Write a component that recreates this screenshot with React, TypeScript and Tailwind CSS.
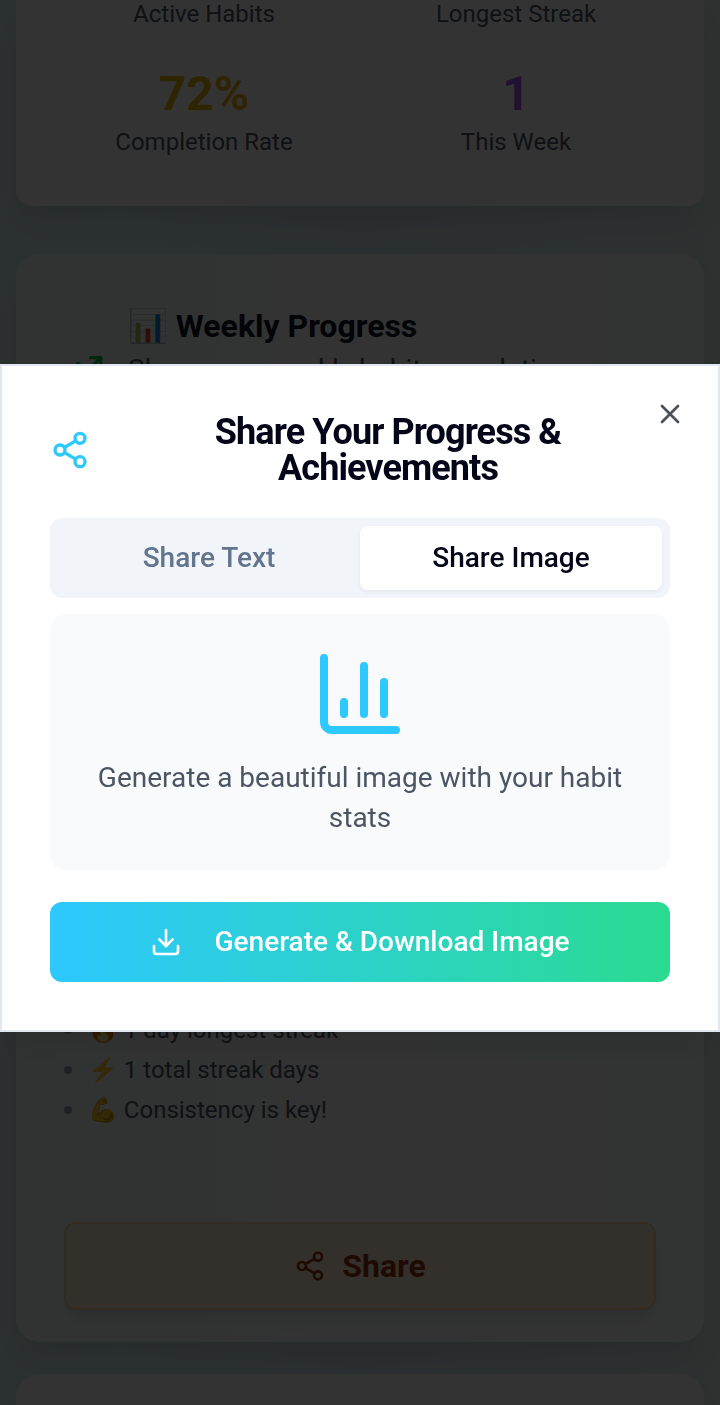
import { useState } from 'react'
import { Share2, X, Download, TrendingUp } from 'lucide-react'

const topLabels = ['Active Habits', 'Longest Streak']

const stats = [
  { value: '72%', label: 'Completion Rate', color: 'text-[#eab308]' },
  { value: '1', label: 'This Week', color: 'text-[#a855f7]' },
]

const highlights = ['🔥 1 day longest streak', '⚡ 1 total streak days', '💪 Consistency is key!']

function StatsCard() {
  return (
    <section className="rounded-b-2xl bg-white px-12 pb-12 shadow-[0_20px_30px_-6px_rgba(0,0,0,0.1)]">
      <div className="grid grid-cols-2 gap-x-8 text-center text-2xl/8 text-gray-600">
        {topLabels.map(label => (
          <div key={label} className="-mt-0.5 mb-8">{label}</div>
        ))}
        {stats.map(s => (
          <div key={s.label}>
            <div className={`text-5xl/16 font-bold ${s.color}`}>{s.value}</div>
            <div>{s.label}</div>
          </div>
        ))}
      </div>
    </section>
  )
}

function WeeklyCard() {
  return (
    <section className="flex min-h-[1088px] flex-col rounded-3xl bg-gradient-to-r from-[#f5faf8] to-[#fafffc] px-12 pt-12 pb-8 shadow-[0_20px_30px_-6px_rgba(0,0,0,0.1)]">
      <div className="flex items-center gap-6">
        <TrendingUp className="size-10 shrink-0 text-green-500" />
        <div>
          <h3 className="text-[32px]/12 font-bold text-gray-900">📊 Weekly Progress</h3>
          <p className="max-w-[460px] text-[28px]/10 text-gray-600">Share your weekly habit completion rates</p>
        </div>
      </div>

      <ul className="mt-auto mb-24 flex flex-col gap-2 text-2xl/8 text-gray-600">
        {highlights.map(item => (
          <li key={item} className="flex items-center gap-4">
            <span className="size-2 rounded-full bg-gray-400" />
            {item}
          </li>
        ))}
      </ul>

      <button className="flex h-22 w-full items-center justify-center gap-4 rounded-xl border-2 border-orange-200 bg-orange-100 text-[32px] font-bold text-[#9a3412] shadow-lg">
        <Share2 className="size-8" />
        Share
      </button>
    </section>
  )
}

function ShareDialog({ onClose }: { onClose: () => void }) {
  const [tab, setTab] = useState('image')

  const tabClass = (name: string) =>
    `h-16 flex-1 rounded-lg text-[28px]/10 font-medium ${
      tab === name ? 'bg-white text-slate-950 shadow-[0_2px_4px_rgba(0,0,0,0.05)]' : 'text-slate-500'
    }`

  return (
    <div
      role="dialog"
      aria-labelledby="share-title"
      className="relative w-full border-2 border-slate-200 bg-white p-12 shadow-[0_20px_30px_-6px_rgba(0,0,0,0.1)]"
    >
      <div className="flex items-center gap-4">
        <Share2 className="size-10 shrink-0 text-[#2dc8ff]" />
        <h2 id="share-title" className="flex-1 text-center text-4xl/9 font-bold tracking-tight text-slate-950">
          Share Your Progress & Achievements
        </h2>
      </div>

      <div role="tablist" className="mt-8 flex rounded-xl bg-slate-100 p-2">
        <button role="tab" aria-selected={tab === 'text'} className={tabClass('text')} onClick={() => setTab('text')}>
          Share Text
        </button>
        <button role="tab" aria-selected={tab === 'image'} className={tabClass('image')} onClick={() => setTab('image')}>
          Share Image
        </button>
      </div>

      <div className="mt-4 rounded-2xl bg-[#f9fafc] p-8 text-center">
        <svg
          className="mx-auto mb-4 size-24 text-[#2dc8ff]"
          viewBox="0 0 24 24"
          fill="none"
          stroke="currentColor"
          strokeWidth="2"
          strokeLinecap="round"
          strokeLinejoin="round"
        >
          <path d="M3 3v16a2 2 0 0 0 2 2h16" />
          <path d="M18 17V9" />
          <path d="M13 17V5" />
          <path d="M8 17v-3" />
        </svg>
        <p className="text-[28px]/10 text-[#4b5563]">Generate a beautiful image with your habit stats</p>
      </div>

      <button className="mt-8 flex h-20 w-full items-center justify-center gap-8 rounded-xl bg-linear-[90deg,#2dc8ff,#2bdb91] text-[28px]/10 font-medium text-white">
        <Download className="size-8" />
        Generate & Download Image
      </button>

      <button aria-label="Close" className="absolute top-8 right-8 text-slate-950 opacity-70" onClick={onClose}>
        <X className="size-8" />
      </button>
    </div>
  )
}

export default function App() {
  const [open, setOpen] = useState(true)

  return (
    <div className="h-screen overflow-hidden bg-linear-[90deg,#d7f3ee,#d2e8f2,#def3ee] font-[Roboto,'Noto_Color_Emoji',sans-serif]">
      <main className="flex flex-col px-4">
        <StatsCard />
        <div className="mt-12">
          <WeeklyCard />
        </div>
        <section className="mt-8 h-40 rounded-3xl bg-[#f7fffb] shadow-[0_20px_30px_-6px_rgba(0,0,0,0.1)]" />
      </main>

      {open && (
        <div className="fixed inset-0 flex items-center bg-black/80 pb-[9px]">
          <ShareDialog onClose={() => setOpen(false)} />
        </div>
      )}
    </div>
  )
}
